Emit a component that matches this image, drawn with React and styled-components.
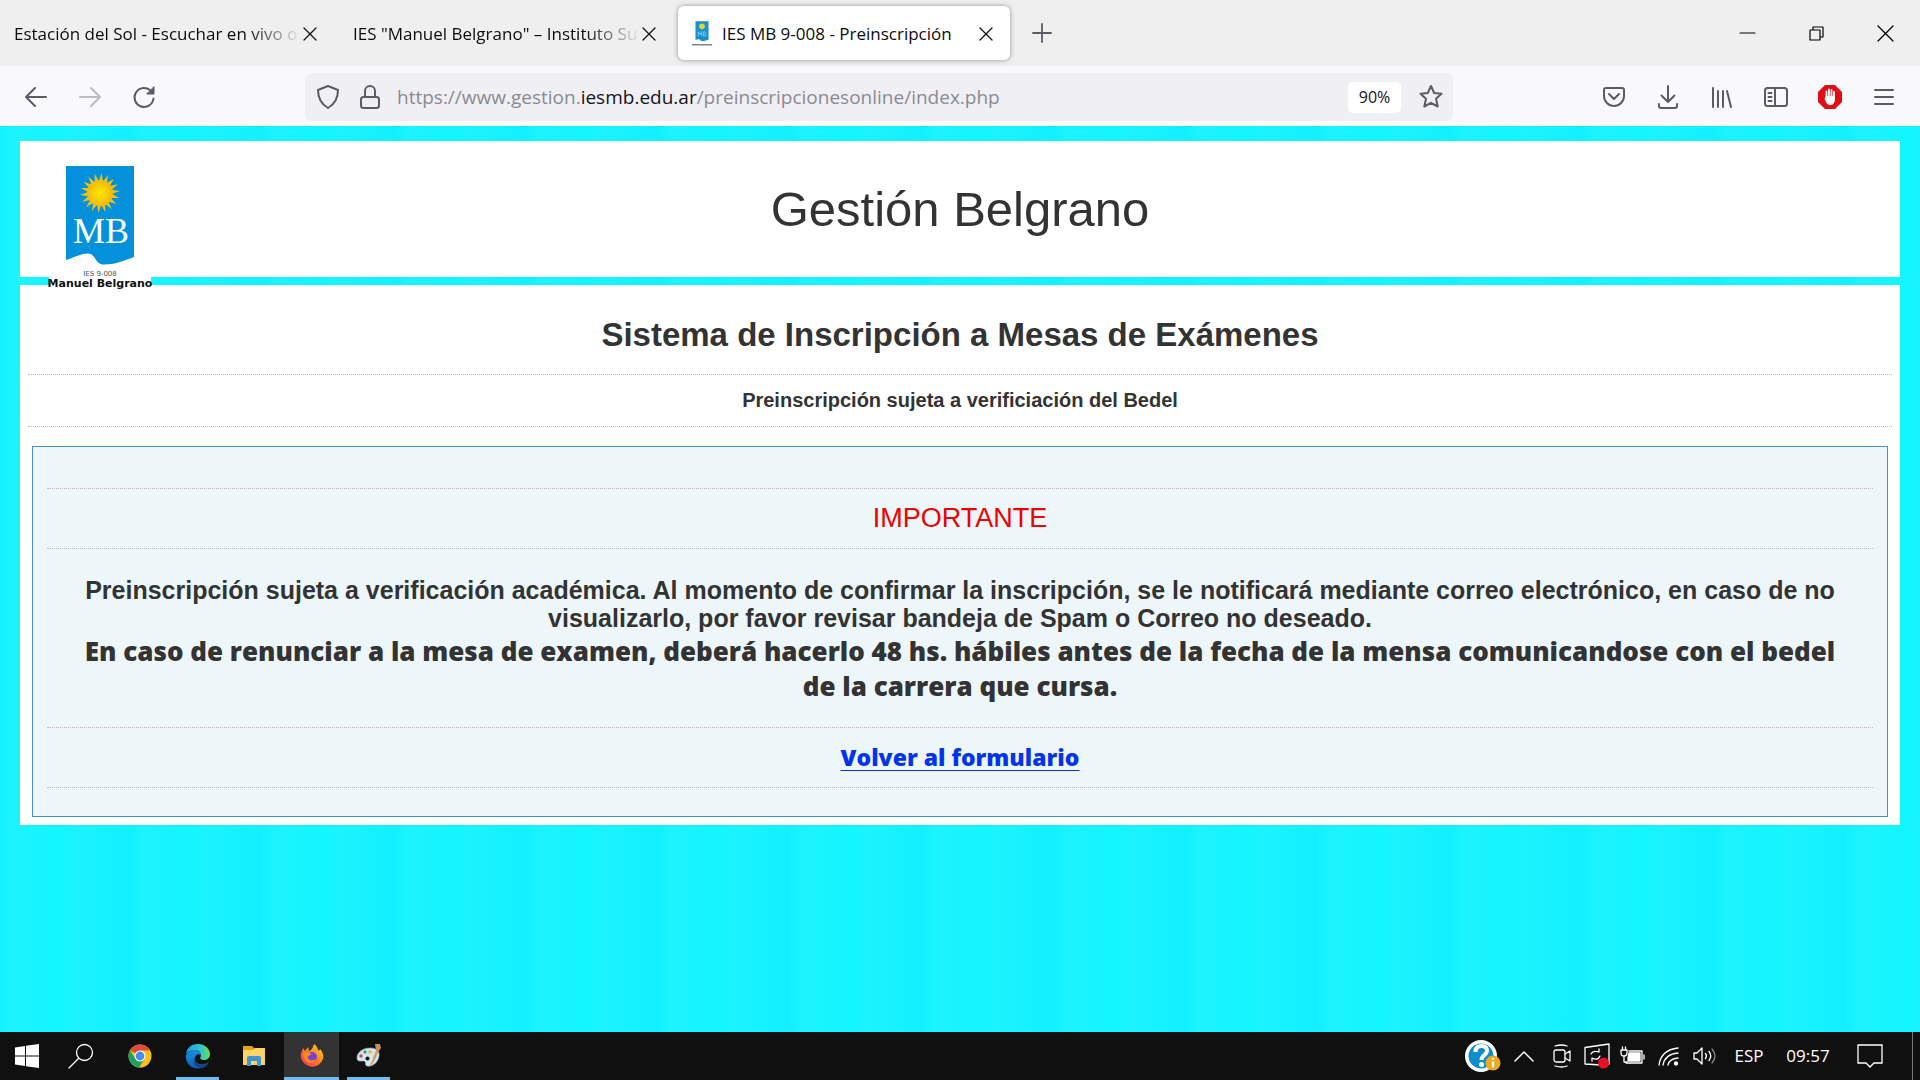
import React from "react";
import styled, { createGlobalStyle } from "styled-components";

const ui = `"Open Sans", "Noto Sans", sans-serif`;
const arial = `"Liberation Sans", Arial, sans-serif`;
const heavy = `"Open Sans", "Liberation Sans", sans-serif`;

const Global = createGlobalStyle`
  *, *::before, *::after { box-sizing: border-box; }
  body { margin: 0; font-family: ${arial}; color: #333; }
  button { border: 0; padding: 0; background: none; font: inherit; color: inherit; }
  svg { display: block; flex: none; overflow: visible; }
`;

const Screen = styled.div`
  min-height: 100vh;
  display: flex;
  flex-direction: column;
`;

/* ---------- browser chrome ---------- */
const TabStrip = styled.nav`
  display: flex;
  align-items: center;
  height: 66px;
  background: #efefef;
  font: 17px/24px ${ui};
  color: #0c0c0d;
`;
const Tab = styled.div`
  display: flex;
  align-items: center;
  width: ${(p) => (p.$active ? 332 : 338)}px;
  height: 54px;
  padding: 1px ${(p) => (p.$active ? 16 : 20)}px 0 14px;
  border-radius: 6px;
  background: ${(p) => (p.$active ? "#fff" : "transparent")};
  box-shadow: ${(p) => (p.$active ? "0 0 5px rgba(0,0,0,.4)" : "none")};
`;
const Tabs = styled.div`
  display: flex;
  gap: 1px;
`;
const TabTitle = styled.button`
  flex: 1;
  min-width: 0;
  white-space: nowrap;
  text-align: left;
  margin-left: ${(p) => (p.$icon ? 10 : 0)}px;
  mask-image: ${(p) => (p.$fade ? "linear-gradient(to right, #000 calc(100% - 56px), transparent)" : "none")};
`;
const IconButton = styled.button`
  display: grid;
  place-items: center;
  flex: none;
  width: ${(p) => p.$w || 54}px;
  height: ${(p) => p.$h || 48}px;
  color: ${(p) => p.$c || "#5b5b66"};
`;
const Spacer = styled.div`
  flex: 1;
`;
const Toolbar = styled.header`
  display: flex;
  align-items: center;
  height: 60px;
  padding: 2px 9px 0;
  background: #f9f9fb;
`;
const NavGroup = styled.div`
  display: flex;
  flex: 1 1 0;
`;
const ToolGroup = styled(NavGroup)`
  justify-content: flex-end;
`;
const AddressBar = styled.div`
  display: flex;
  align-items: center;
  flex: 0 1 1148px;
  height: 48px;
  margin: 0 134px 0 32px;
  border-radius: 6px;
  background: #f0f0f4;
  padding-left: 2px;
`;
const Url = styled.div`
  flex: 1;
  padding-left: 6px;
  font: 19px/28px ${ui};
  color: #8a8a91;
  white-space: nowrap;
  b { font-weight: 400; color: #15141a; }
`;
const Zoom = styled.button`
  width: 53px;
  height: 31px;
  margin-right: 8px;
  border-radius: 5px;
  background: #fff;
  font: 16px/31px ${ui};
  color: #15141a;
`;

/* ---------- page ---------- */
const Page = styled.main`
  flex: 1;
  display: flex;
  flex-direction: column;
  gap: 8px;
  padding: 15px 20px;
  background: repeating-linear-gradient(90deg, #12f0ff 0, #1df3ff 12px, #12f5ff 60px, #1bf4ff 72px, #16f1ff 108px, #12f0ff 132px);
`;
const Card = styled.section`
  background: #fff;
`;
const Banner = styled(Card)`
  display: flex;
  align-items: flex-start;
  height: 136px;
  padding: 24px 28px 0;
`;
const Side = styled.div`
  flex: 1;
`;
const LogoSide = styled(Side)`
  position: relative;
  z-index: 1;
`;
const Brand = styled.h1`
  margin: 14px 0 0;
  font: 400 49px/60px ${arial};
`;
const Content = styled(Card)`
  padding: 24px 8px 8px;
  text-align: center;
`;
const Title = styled.h2`
  margin: 0;
  padding: 6px 0 19px;
  font: 700 33px/40px ${arial};
`;
const Rule = styled.hr`
  margin: 0;
  border: 0;
  border-top: 1px dotted #bbb;
`;
const Subtitle = styled.p`
  margin: 0;
  padding: 11px 0 12px;
  font: 700 20px/28px ${arial};
`;
const Notice = styled.div`
  margin: 19px 4px 0;
  padding: 41px 14px 28px;
  border: 1px solid #4590cc;
  background: #edf6f9;
`;
const Important = styled.p`
  margin: 0;
  padding: 14px 0;
  font: 27px/31px ${arial};
  color: #f00000;
`;
const Message = styled.div`
  display: grid;
  gap: 2px;
  padding: 27px 16px 23px;
`;
const Paragraph = styled.p`
  margin: 0;
  font: 700 25px/28px ${arial};
`;
const StrongParagraph = styled.p`
  margin: 0;
  font: 800 26px/35px ${heavy};
`;
const BackRow = styled.p`
  margin: 0;
  padding: 14px 0;
  font: 800 23px/31px ${heavy};
`;
const BackLink = styled.a`
  color: #0433f0;
  text-underline-offset: 4px;
  text-decoration-thickness: 1px;
`;

/* ---------- taskbar ---------- */
const Taskbar = styled.footer`
  display: flex;
  height: 48px;
  background: #101010;
  color: #fff;
  font: 17px/48px ${ui};
`;
const TaskButton = styled.button`
  display: grid;
  place-items: center;
  width: ${(p) => p.$w}px;
  height: 48px;
  background: ${(p) => (p.$on ? "#333" : "transparent")};
  box-shadow: ${(p) => (p.$run ? "inset 0 -3px #76b9ed" : "none")};
  margin-right: ${(p) => p.$gap || 0}px;
`;
const TrayText = styled.span`
  width: ${(p) => p.$w}px;
  text-align: center;
`;
const ShowDesktop = styled.button`
  width: 8px;
  border-left: 1px solid #777;
`;

const I = ({ w = 24, h = w, vb = `0 0 ${w} ${h}`, sw = 2, children }) => (
  <svg width={w} height={h} viewBox={vb} fill="none" stroke="currentColor" strokeWidth={sw} strokeLinecap="round" strokeLinejoin="round" aria-hidden="true">
    {children}
  </svg>
);

const rays = Array.from({ length: 36 }, (_, i) => {
  const r = i % 2 ? 12 : 20;
  const a = (i * Math.PI) / 18 - 0.1;
  return `${(34 + r * Math.cos(a)).toFixed(1)},${(27 + r * Math.sin(a)).toFixed(1)}`;
}).join(" ");

const Flag = () => (
  <>
    <path d="M0 0h68v91c-11 4-20 8-32 7.500C28 96 30 88 22 87.500 14 87.500 8 92 0 94z" fill="#0590dc" />
    <polygon points={rays} fill="#e8c21c" />
    <circle cx="34" cy="27" r="13" fill="url(#sun)" />
    <text x="35" y="77" textAnchor="middle" fontSize="36" fill="#f4fcff" fontFamily="Liberation Serif, serif">MB</text>
  </>
);
const Logo = () => (
  <svg width="104" height="126" viewBox="0 0 104 126" role="img" aria-label="IES 9-008 Manuel Belgrano">
    <defs>
      <radialGradient id="sun"><stop offset="0" stopColor="#ffe900" /><stop offset="1" stopColor="#f2b90d" /></radialGradient>
    </defs>
    <rect x="1" y="104" width="102" height="20" fill="#fff" />
    <g transform="translate(18 1)"><Flag /></g>
    <text x="52" y="111" textAnchor="middle" fontSize="7" fill="#555" fontFamily="DejaVu Sans, sans-serif">IES 9-008</text>
    <text x="52" y="122" textAnchor="middle" fontSize="11" fontWeight="700" fill="#111" fontFamily="DejaVu Sans, sans-serif">Manuel Belgrano</text>
  </svg>
);
const Favicon = () => (
  <svg width="20" height="25" viewBox="0 0 104 126" preserveAspectRatio="none" aria-hidden="true">
    <path d="M18 1h68v93c-20 6-34 10-42 4-6-8-12-6-26-3z" fill="#1b8fcb" />
    <circle cx="52" cy="27" r="15" fill="#dcd23c" />
    <path d="M32 76V54l9 14 9-14v22M60 54v22h7q7-2 6-7-1-5-7-5 6-1 5-5-1-5-6-5z" fill="none" stroke="#79c6ee" strokeWidth="5" />
    <rect y="117" width="104" height="6" fill="#666" />
  </svg>
);
const Cross = ({ s = 12 }) => <I w={s} sw={1.3}><path d={`M0 0L${s} ${s}M${s} 0L0 ${s}`} /></I>;

const Chrome = () => (
  <svg width="24" height="24" viewBox="0 0 24 24" aria-hidden="true">
    <circle cx="12" cy="12" r="11.500" fill="#fbc11a" />
    <path d="M12 12L2 6.250A11.500 11.500 0 0 1 22 6.500H12z" fill="#dd4b3e" />
    <path d="M2 6.250A11.500 11.500 0 0 0 11 23.500L16.500 15 12 17 7 14z" fill="#1da15f" />
    <circle cx="12" cy="12" r="5.500" fill="#fff" /><circle cx="12" cy="12" r="4.400" fill="#4a8af4" />
  </svg>
);
const Edge = () => (
  <svg width="26" height="26" viewBox="0 0 26 26" aria-hidden="true">
    <defs>
      <linearGradient id="e1"><stop offset="0" stopColor="#1d9de2" /><stop offset=".6" stopColor="#33c4c9" /><stop offset="1" stopColor="#6be04c" /></linearGradient>
      <linearGradient id="e2" x2="0" y2="1"><stop offset="0" stopColor="#1a8fdb" /><stop offset="1" stopColor="#0d5fb5" /></linearGradient>
    </defs>
    <path d="M1 11C2 4 7 1 13 1c7 0 12 5 12 10 0 4-3 6-6 6-4 0-4-2-3.500-3C17 10 14 7 10 7 6 7 2 9 1 11z" fill="url(#e1)" />
    <path d="M1 12c1-3 5-5 9-5 4 0 6 3 6 5-3-2-6 0-6 4 0 5 5 8 9 7-2 2-4 2.500-6 2.500C5 25.500 0 19 1 12z" fill="url(#e2)" />
    <path d="M10 14c-1 4 3 8 8 7 3 0 5-2 6-2-1 3-5 6-8 6-6 0-9-6-6-11z" fill="#12478c" />
  </svg>
);
const Folder = () => (
  <svg width="24" height="22" viewBox="0 0 24 22" aria-hidden="true">
    <path d="M1 1h9l3 3h10v16H1z" fill="#e0a40c" /><path d="M1 5h10l2-2h10v17H1z" fill="#fbd367" />
    <path d="M5 21v-8q0-2 2-2h10q2 0 2 2v8h-4v-5H9v5z" fill="#3f94d2" />
  </svg>
);
const Firefox = () => (
  <svg width="24" height="24" viewBox="0 0 24 24" aria-hidden="true">
    <defs><linearGradient id="ff" x1="1" x2="0" y2="1"><stop offset="0" stopColor="#ffe22c" /><stop offset=".5" stopColor="#ff7a22" /><stop offset="1" stopColor="#f5256b" /></linearGradient></defs>
    <path d="M14 0c4 3 3 5 5 7l1-2c3 3 4 7 3 10A11.500 11.500 0 0 1 1 14C0 10 2 7 3 4l2 3 3-4 1 4c3-1 4-4 5-7z" fill="url(#ff)" />
    <circle cx="12" cy="13" r="5" fill="#7942cc" /><path d="M3 9c3-2 5 0 9 1-2 2-5 1-4 4 1 3 5 3 8 1-1 4-7 5-10 2-2-2-3-5-3-8z" fill="#ff8b20" />
  </svg>
);
const Paint = () => (
  <svg width="26" height="26" viewBox="0 0 26 26" aria-hidden="true">
    <path d="M1 15C1 9 7 5 14 5c6 0 10 3 9 8-1 7-7 11-12 10-3-1 0-4-3-5-3 0-7 1-7-3z" fill="#cfe6f3" stroke="#8fb5cd" strokeWidth=".6" />
    <circle cx="5" cy="13" r="1.700" fill="#d6473a" /><circle cx="9" cy="9" r="1.700" fill="#52a447" /><circle cx="14" cy="9" r="1.700" fill="#eab332" /><circle cx="11.500" cy="15.500" r="2" fill="#101010" />
    <path d="M13 24c3-5 4-10 7-16l2 1c-2 6-4 11-9 15z" fill="#e09a4b" /><path d="M19 1l5 0 1 4-3 4-2-1z" fill="#c98e5c" />
  </svg>
);

export default function App() {
  return (
    <Screen>
      <Global />
      <TabStrip>
        <Tabs>
          <Tab><TabTitle $fade>Estación del Sol - Escuchar en vivo o</TabTitle><IconButton $w={16} $h={24} $c="#111" aria-label="Cerrar pestaña"><Cross /></IconButton></Tab>
          <Tab><TabTitle $fade>IES "Manuel Belgrano" – Instituto Su</TabTitle><IconButton $w={16} $h={24} $c="#111" aria-label="Cerrar pestaña"><Cross /></IconButton></Tab>
          <Tab $active><Favicon /><TabTitle $icon>IES MB 9-008 - Preinscripción</TabTitle><IconButton $w={16} $h={24} $c="#111" aria-label="Cerrar pestaña"><Cross /></IconButton></Tab>
        </Tabs>
        <IconButton $w={64} aria-label="Nueva pestaña"><I w={18} sw={1.8}><path d="M9 0v18M0 9h18" /></I></IconButton>
        <Spacer />
        <IconButton $w={69} $c="#000" aria-label="Minimizar"><I w={16} sw={1.2}><path d="M0 8h15" /></I></IconButton>
        <IconButton $w={69} $c="#000" aria-label="Restaurar"><I w={15} sw={1.2}><path d="M1 4h10v10H1zM4 4V1h10v10h-3" /></I></IconButton>
        <IconButton $w={69} $c="#000" aria-label="Cerrar"><Cross s={15} /></IconButton>
      </TabStrip>

      <Toolbar>
        <NavGroup>
          <IconButton aria-label="Atrás"><I w={22}><path d="M1 11h20M10 2l-9 9 9 9" /></I></IconButton>
          <IconButton $c="#bcbcc2" aria-label="Adelante"><I w={22}><path d="M1 11h20M12 2l9 9-9 9" /></I></IconButton>
          <IconButton aria-label="Recargar"><I w={22}><path d="M20.500 12.500A9.500 9.500 0 1 1 17 4" /><path d="M21 1v7h-7z" fill="currentColor" strokeWidth="1" /></I></IconButton>
        </NavGroup>
        <AddressBar>
          <IconButton $w={42} aria-label="Protección"><I w={22} h={24}><path d="M11 1l10 4c0 8-3 14-10 18C4 19 1 13 1 5z" /></I></IconButton>
          <IconButton $w={42} aria-label="Conexión segura"><I w={18} h={24}><rect x="0" y="12" width="18" height="11" rx="2.500" /><path d="M4 12V6a5 5 0 0 1 10 0v6" /></I></IconButton>
          <Url>https://www.gestion.<b>iesmb.edu.ar</b>/preinscripcionesonline/index.php</Url>
          <Zoom>90%</Zoom>
          <IconButton $w={44} aria-label="Marcador"><I w={24}><path d="M12 1l3.200 7 7.300.8-5.500 5 1.700 7.700L12 17.800 5.300 21.500 7 13.800l-5.500-5L8.800 8z" /></I></IconButton>
        </AddressBar>
        <ToolGroup>
          <IconButton aria-label="Pocket"><I w={22} h={20}><path d="M3 1h16q2 0 2 2v6a10 10 0 0 1-20 0V3q0-2 2-2zM6 7l5 5 5-5" /></I></IconButton>
          <IconButton aria-label="Descargas"><I w={20} h={23}><path d="M10 0v16M3.500 9.500L10 16l6.500-6.500M1 18v2q0 2 2 2h14q2 0 2-2v-2" /></I></IconButton>
          <IconButton aria-label="Biblioteca"><I w={20} h={21}><path d="M1 1v19M6 4v16M11 4v16M15 4l4 16" /></I></IconButton>
          <IconButton aria-label="Barra lateral"><I w={24} h={20}><rect x="1" y="1" width="22" height="18" rx="2.500" /><path d="M11 1v18M4.500 6h3M4.500 10h3M4.500 14h3" /></I></IconButton>
          <IconButton aria-label="Bloqueador">
            <svg width="24" height="24" viewBox="0 0 24 24" aria-hidden="true"><path d="M7 0h10l7 7v10l-7 7H7l-7-7V7z" fill="#e00d13" /><path d="M8.500 12V6.500M11 11V4.500M13.500 11V5M16 13V7" stroke="#fff" strokeWidth="1.800" strokeLinecap="round" /><path d="M7.600 11h9.300v4q-.6 5-4.300 5-3.600 0-4.600-3l-1.500-3z" fill="#fff" /></svg>
          </IconButton>
          <IconButton aria-label="Menú"><I w={18} h={16}><path d="M0 1h18M0 8h18M0 15h18" /></I></IconButton>
        </ToolGroup>
      </Toolbar>

      <Page>
        <Banner><LogoSide><Logo /></LogoSide><Brand>Gestión Belgrano</Brand><Side /></Banner>
        <Content>
          <Title>Sistema de Inscripción a Mesas de Exámenes</Title>
          <Rule />
          <Subtitle>Preinscripción sujeta a verificiación del Bedel</Subtitle>
          <Rule />
          <Notice>
            <Rule />
            <Important>IMPORTANTE</Important>
            <Rule />
            <Message>
              <Paragraph>Preinscripción sujeta a verificación académica. Al momento de confirmar la inscripción, se le notificará mediante correo electrónico, en caso de no visualizarlo, por favor revisar bandeja de Spam o Correo no deseado.</Paragraph>
              <StrongParagraph>En caso de renunciar a la mesa de examen, deberá hacerlo 48 hs. hábiles antes de la fecha de la mensa comunicandose con el bedel<br />de la carrera que cursa.</StrongParagraph>
            </Message>
            <Rule />
            <BackRow><BackLink href="#formulario">Volver al formulario</BackLink></BackRow>
            <Rule />
          </Notice>
        </Content>
      </Page>

      <Taskbar>
        <TaskButton $w={54} aria-label="Inicio"><svg width="24" height="24" viewBox="0 0 24 24" fill="#fff" aria-hidden="true"><path d="M0 3.500L10 2v9.500H0zM11 1.800L24 0v11.500H11zM0 12.500h10V22L0 20.500zM11 12.500h13V24l-13-1.800z" /></svg></TaskButton>
        <TaskButton $w={54} $gap={5} aria-label="Buscar"><I w={24} sw={1.3}><circle cx="15.500" cy="8.500" r="8" /><path d="M9.500 14.500L0 24" /></I></TaskButton>
        <TaskButton $w={54} $gap={9} aria-label="Chrome"><Chrome /></TaskButton>
        <TaskButton $w={43} $run $gap={8} aria-label="Edge"><Edge /></TaskButton>
        <TaskButton $w={54} $gap={3} aria-label="Explorador"><Folder /></TaskButton>
        <TaskButton $w={55} $on $run $gap={8} aria-label="Firefox"><Firefox /></TaskButton>
        <TaskButton $w={43} $run aria-label="Paint"><Paint /></TaskButton>
        <Spacer />
        <TaskButton $w={42} aria-label="Ayuda">
          <svg width="36" height="32" viewBox="0 0 36 32" aria-hidden="true"><circle cx="17" cy="16" r="16" fill="#fff" /><circle cx="17" cy="16" r="12.500" fill="#0d8ecb" /><path d="M11.500 12q0-6 6-6 5.500 0 5.500 5c0 4-5.500 4-5.500 9" fill="none" stroke="#fff" strokeWidth="4" /><circle cx="17.500" cy="24.500" r="2.500" fill="#fff" /><circle cx="29" cy="23" r="7.500" fill="#eeaa1c" /><path d="M29 21.500v6M29 18v1.500" stroke="#fff" strokeWidth="2.400" /></svg>
        </TaskButton>
        <TaskButton $w={42} aria-label="Mostrar iconos ocultos"><I w={18} h={10} sw={1.5}><path d="M0 10l9-9 9 9" /></I></TaskButton>
        <TaskButton $w={33} aria-label="Reunirse"><I w={16} h={22} sw={1.3}><rect x="0" y="5" width="11" height="12" rx="2" /><path d="M11 9l5-3v10l-5-3M1 1q7-2 12 0M1 21q7 2 12 0" /></I></TaskButton>
        <TaskButton $w={37} aria-label="Actualización"><I w={24} h={24} sw={1.3}><path d="M0 3.500L24 0v20l-8 1L0 20z" /><path d="M6 10q2-4 8-2V5M15 12q-2 5-8 2v3" /><circle cx="18.500" cy="19" r="5.500" fill="#e81123" stroke="none" /></I></TaskButton>
        <TaskButton $w={36} aria-label="Batería"><I w={24} h={18} sw={1.3}><path d="M0 3h6v3q0 3-3 3-3 0-3-3zM1.500 0v3M4.500 0v3M3 9v6h3M8 4h13v12H5" /><path d="M8 6h11v8H7v-3z" fill="#fff" /><path d="M23 8v4" /></I></TaskButton>
        <TaskButton $w={36} aria-label="Wi-Fi"><I w={20} h={18} sw={1.3}><path d="M0 18Q2 3 19 1M4 18Q6 7 19 6M9 18q1-6 10-7" /><circle cx="17" cy="16.500" r="1.500" fill="#fff" /></I></TaskButton>
        <TaskButton $w={36} aria-label="Volumen"><I w={24} h={18} sw={1.3}><path d="M1 6h3l5-5v16l-5-5H1z" /><path d="M12.500 6.500q2 2.500 0 5M16 4.500q3.500 4.500 0 9" /><path d="M19 2q6 7 0 14" opacity=".5" /></I></TaskButton>
        <TrayText $w={52}>ESP</TrayText>
        <TrayText $w={66}>09:57</TrayText>
        <TaskButton $w={58} $gap={13} aria-label="Notificaciones"><I w={24} h={24} sw={1.3}><path d="M0 1h24v18h-8l-4 4-4-4H0z" strokeLinejoin="miter" /></I></TaskButton>
        <ShowDesktop aria-label="Mostrar escritorio" />
      </Taskbar>
    </Screen>
  );
}
